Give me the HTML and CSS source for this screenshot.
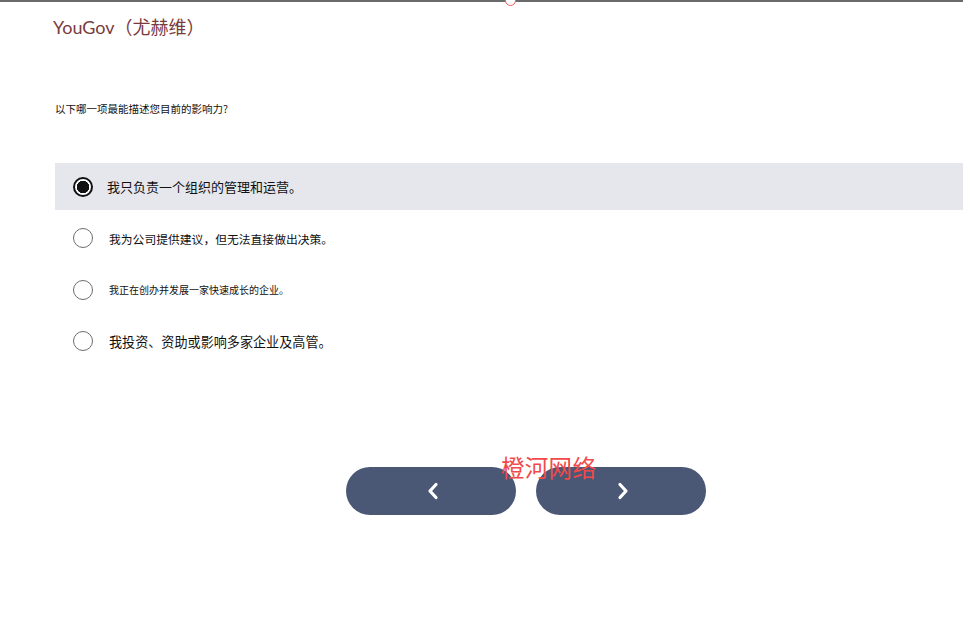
FILE: index.html
```html
<!DOCTYPE html>
<html lang="zh">
<head>
<meta charset="utf-8">
<title>YouGov</title>
<link rel="stylesheet" href="styles.css">
</head>
<body>
<div class="topbar"><span class="topdot"></span></div>
<header class="brand">YouGov（尤赫维）</header>
<main class="survey">
  <p class="question">以下哪一项最能描述您目前的影响力?</p>
  <ul class="options">
    <li class="option selected"><span class="radio"></span><span class="label l1">我只负责一个组织的管理和运营。</span></li>
    <li class="option"><span class="radio"></span><span class="label l2">我为公司提供建议，但无法直接做出决策。</span></li>
    <li class="option"><span class="radio"></span><span class="label l3">我正在创办并发展一家快速成长的企业。</span></li>
    <li class="option"><span class="radio"></span><span class="label l4">我投资、资助或影响多家企业及高管。</span></li>
  </ul>
  <div class="nav">
    <button class="navbtn" aria-label="上一页">
      <svg width="14" height="18" viewBox="0 0 14 18"><path d="M10 2.5 L4 9 L10 15.5" fill="none" stroke="#fff" stroke-width="3.2" stroke-linecap="round" stroke-linejoin="round"/></svg>
    </button>
    <button class="navbtn" aria-label="下一页">
      <svg width="14" height="18" viewBox="0 0 14 18"><path d="M4 2.5 L10 9 L4 15.5" fill="none" stroke="#fff" stroke-width="3.2" stroke-linecap="round" stroke-linejoin="round"/></svg>
    </button>
    <span class="watermark">橙河网络</span>
  </div>
</main>
</body>
</html>
```
FILE: styles.css
```css
* { box-sizing: border-box; }
html, body { margin: 0; padding: 0; background: #fff; }
body {
  font-family: "Noto Sans CJK SC", "Noto Sans", sans-serif;
  color: #111;
  width: 963px;
  height: 628px;
  overflow: hidden;
}
.topbar {
  position: relative;
  height: 2px;
  background: #6a6a6a;
}
.topdot {
  position: absolute;
  left: 505px;
  top: -5px;
  width: 11px;
  height: 11px;
  border-radius: 50%;
  border: 1.5px solid #f05a5a;
  background: #fff;
}
.brand {
  margin: 13px 0 0 53px;
  font-family: "Lato", "Noto Sans CJK SC", sans-serif;
  font-size: 18px;
  line-height: 24px;
  color: #7a3a3c;
}
.survey { margin: 0; }
.question {
  margin: 63px 0 0 55px;
  font-size: 10.5px;
  line-height: 14px;
  color: #111;
}
.options {
  list-style: none;
  margin: 47px 0 0 55px;
  padding: 0;
  display: flex;
  flex-direction: column;
  gap: 4.5px;
}
.option {
  height: 47px;
  display: flex;
  align-items: center;
  padding-left: 18px;
}
.option.selected { background: #e6e7ec; }
.radio {
  width: 20px;
  height: 20px;
  border-radius: 50%;
  border: 1px solid #6e6e6e;
  background: #fff;
  flex: none;
  margin-right: 16px;
}
.option.selected .radio {
  border: 2.5px solid #111;
  background: radial-gradient(circle, #111 0 6px, #fff 6.5px);
  margin-right: 14px;
}
.label { color: #111; white-space: nowrap; }
.l1 { font-size: 13px; }
.l2 { font-size: 11.8px; }
.l3 { font-size: 10px; }
.l4 { font-size: 13.1px; }
.nav {
  position: relative;
  display: flex;
  gap: 20px;
  margin: 102px 0 0 346px;
}
.navbtn {
  width: 170px;
  height: 48px;
  border: none;
  border-radius: 24px;
  background: #4a5876;
  display: flex;
  align-items: center;
  justify-content: center;
  padding: 0 0 0 3px;
  cursor: pointer;
}
.watermark {
  position: absolute;
  left: 155px;
  top: -15px;
  font-size: 23.5px;
  line-height: 30px;
  color: #f24a4a;
  letter-spacing: 0.3px;
}
```
